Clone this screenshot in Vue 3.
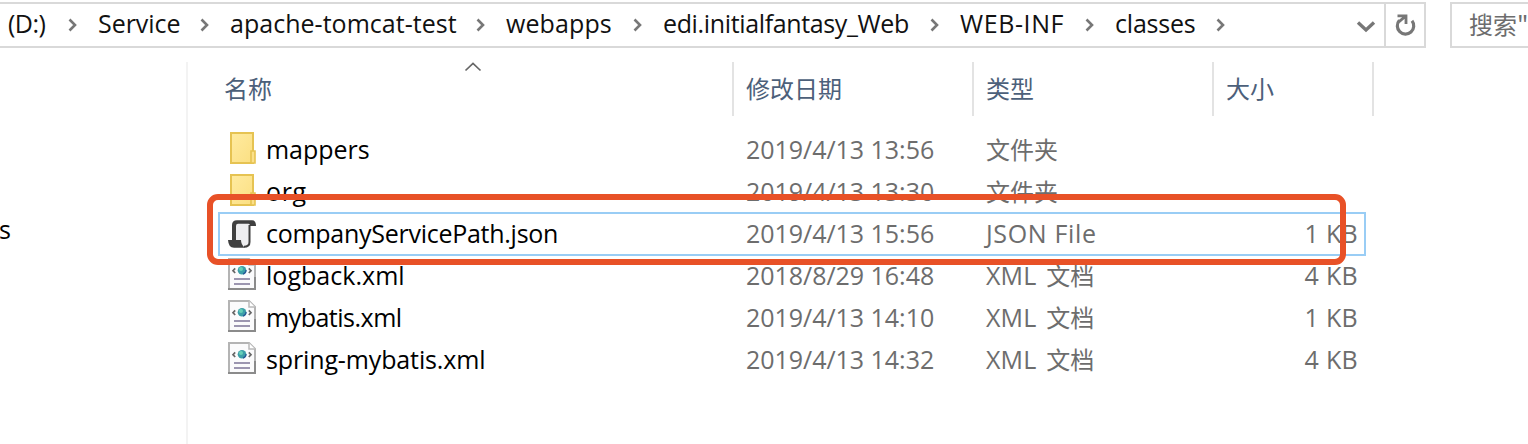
<script setup>
const crumbs = [
  { text: '(D:)', cls: 't0' },
  { text: 'Service', cls: 't4' },
  { text: 'apache-tomcat-test', cls: 't5' },
  { text: 'webapps', cls: 't7' },
  { text: 'edi.initialfantasy_Web', cls: 't1' },
  { text: 'WEB-INF', cls: 't10' },
  { text: 'classes', cls: 't3' },
]
const files = [
  { icon: 'folder', name: 'mappers', cls: 't4', date: '2019/4/13 13:56', latin: '', cjk: '文件夹', size: '' },
  { icon: 'folder', name: 'org', cls: 't9', date: '2019/4/13 13:30', latin: '', cjk: '文件夹', size: '' },
  { icon: 'script', name: 'companyServicePath.json', cls: 't2', date: '2019/4/13 15:56', latin: 'JSON File', cjk: '', size: '1 KB', selected: true },
  { icon: 'xml', name: 'logback.xml', cls: 't5', date: '2018/8/29 16:48', latin: 'XML', cjk: '文档', size: '4 KB' },
  { icon: 'xml', name: 'mybatis.xml', cls: 't0', date: '2019/4/13 14:10', latin: 'XML', cjk: '文档', size: '1 KB' },
  { icon: 'xml', name: 'spring-mybatis.xml', cls: 't4b', date: '2019/4/13 14:32', latin: 'XML', cjk: '文档', size: '4 KB' },
]
</script>

<template>
  <div class="window">
    <div class="toolbar">
      <div class="address">
        <div class="crumbs">
          <div v-for="c in crumbs" :key="c.text" class="crumb">
            <span :class="c.cls">{{ c.text }}</span>
            <svg class="chev" width="10" height="14" viewBox="0 0 10 14"><path d="M1.5 1.5 L7 7 L1.5 12.5" /></svg>
          </div>
        </div>
        <svg class="drop" width="20" height="14" viewBox="0 0 20 14"><path d="M2 2.5 L10 10 L18 2.5" /></svg>
        <div class="refresh">
          <svg width="22" height="24" viewBox="0 0 22 24">
            <path class="ring" d="M5.4 7.4 A8.2 8.2 0 1 0 18 7.8" />
            <path class="tip" d="M3.5 2.8 H12 V11 M11.5 3.3 L5.4 8.4" />
          </svg>
        </div>
      </div>
      <div class="search">搜索"</div>
    </div>

    <div class="body">
      <div class="side"><span>s</span></div>
      <div class="list">
        <div class="head">
          <div class="col name">名称
            <svg class="sort" width="18" height="10" viewBox="0 0 18 10"><path d="M1.5 8.5 L9 1.5 L16.5 8.5" /></svg>
          </div>
          <div class="col">修改日期</div>
          <div class="col">类型</div>
          <div class="col">大小</div>
        </div>
        <div class="rows">
          <div v-for="f in files" :key="f.name" class="row" :class="{ selected: f.selected }">
            <div class="icon">
              <svg v-if="f.icon === 'folder'" width="28" height="34" viewBox="0 0 28 34">
                <defs>
                  <linearGradient id="fold" x1="0" y1="0" x2="1" y2="1">
                    <stop offset="0" stop-color="#ffeba0" /><stop offset="1" stop-color="#fbdf82" />
                  </linearGradient>
                </defs>
                <rect x="3" y="2" width="22" height="30" fill="url(#fold)" stroke="#e6c352" stroke-width="2" />
                <path d="M23 32 V20 H27 V32 Z" fill="#fbe08a" stroke="#e6c352" stroke-width="1.6" />
              </svg>
              <svg v-else-if="f.icon === 'script'" width="28" height="34" viewBox="0 0 28 34">
                <path d="M8 4 H22 V26 Q20 30 17 30 H14 L12 23 H6 Z" fill="#eeeef0" />
                <path d="M4 23 V8 Q4 3.2 9 3.2 H24 Q28 3.2 28 9 H22 Q22 6.8 20.5 6.8 H10 Q8 6.8 8 9 V23 Z" fill="#404040" />
                <path d="M0 23 H13 Q13 28 17 30.8 H6 Q0.5 30.8 0 23 Z" fill="#404040" />
                <path d="M21.5 8 V25 Q21.5 29.8 16 29.8" fill="none" stroke="#404040" stroke-width="2" />
              </svg>
              <svg v-else width="28" height="34" viewBox="0 0 28 34">
                <path d="M1 2 H21 L27 8 V32 H1 Z" fill="#fbfbfc" stroke="#b4b4b4" stroke-width="2" />
                <path d="M21 2 V8 H27" fill="#fff" stroke="#b9b9b9" stroke-width="1.5" />
                <path d="M0 32 H28 M27 20 V32" fill="none" stroke="#8b8b8b" stroke-width="2" />
                <circle cx="14" cy="13.3" r="4.3" fill="#3c9fa8" />
                <circle cx="13" cy="12" r="2" fill="#66d0b8" />
                <path d="M15 17 A4 4 0 0 0 18 13" fill="none" stroke="#285c98" stroke-width="1.3" />
                <path d="M7.2 11.4 L5 13.7 L7.2 16 M20.8 11.4 L23 13.7 L20.8 16" fill="none" stroke="#666" stroke-width="1.7" />
                <path d="M6 22 H22 M6 27 H22" stroke="#9c96b0" stroke-width="2" />
              </svg>
            </div>
            <div class="fname"><span :class="f.cls">{{ f.name }}</span></div>
            <div class="date">{{ f.date }}</div>
            <div class="type">
              <span v-if="f.latin" class="latin" :class="{ wide: !f.cjk }">{{ f.latin }}</span>
              <span v-if="f.cjk" class="cjk">{{ f.cjk }}</span>
            </div>
            <div class="size">{{ f.size }}</div>
          </div>
        </div>
      </div>
    </div>
    <div class="marker"></div>
  </div>
</template>

<style>
body { margin: 0; background: #fff; }
</style>

<style scoped>
* { box-sizing: border-box; }
.window {
  position: relative; width: 1528px; height: 444px; overflow: hidden; background: #fff;
  font: 25px/42px "Open Sans", "Noto Sans CJK SC", sans-serif; color: #000; white-space: nowrap;
  display: flex; flex-direction: column;
}
svg { display: block; flex: none; }
.t0 { letter-spacing: -.5px; } .t1 { letter-spacing: -.36px; } .t2 { letter-spacing: -.27px; }
.t3 { letter-spacing: -.2px; } .t4 { letter-spacing: -.03px; } .t4b { letter-spacing: -.13px; } .t5 { letter-spacing: .03px; }
.t7 { letter-spacing: .1px; } .t9 { letter-spacing: .6px; } .t10 { letter-spacing: .6px; }

.toolbar { display: flex; gap: 24px; height: 62px; padding-top: 2px; flex: none; }
.address { display: flex; width: 1426px; height: 46px; flex: none; border: 2px solid #d9d9d9; border-left: 0; align-items: center; }
.crumbs { display: grid; grid-template-columns: 90px 132px 276px 157px 297px 155px 131px; padding-left: 8px; flex: 1; }
.crumb { display: flex; align-items: center; justify-content: space-between; padding-right: 20px; height: 42px; color: #111; }
.crumb span { line-height: 38px; padding-bottom: 4px; }
.chev path { fill: none; stroke: #777; stroke-width: 2.6; }
.drop { margin-right: 8px; margin-top: 3px; }
.drop path { fill: none; stroke: #777; stroke-width: 3.4; }
.refresh { width: 40px; height: 42px; border-left: 2px solid #d9d9d9; display: flex; align-items: center; justify-content: center; }
.ring { fill: none; stroke: #777; stroke-width: 3.2; }
.tip { fill: none; stroke: #777; stroke-width: 2.8; }
.search { width: 90px; height: 46px; flex: none; border: 2px solid #d9d9d9; border-right: 0; padding-left: 17px; color: #6d6d6d; font: 24px/40px "Noto Sans CJK SC", sans-serif; }

.body { display: flex; flex: 1; }
.side { width: 188px; border-right: 2px solid #f3f3f3; padding-top: 146px; flex: none; }
.side span { display: block; margin-left: -1px; }
.list { width: 1186px; }
.head { display: grid; grid-template-columns: 546px 240px 240px 160px; height: 54px; color: #4c607a; font: 24px/51px "Noto Sans CJK SC", sans-serif; }
.col { border-right: 2px solid #e3e3e3; padding-left: 12px; }
.name { display: flex; padding-left: 36px; }
.sort { margin-left: 192px; }
.sort path { fill: none; stroke: #666; stroke-width: 1.7; }
.rows { padding: 13px 0 0 30px; }
.row { display: grid; grid-template-columns: 38px 480px 240px 226px 146px; height: 42px; width: 1148px; padding-left: 10px; align-items: center; line-height: 40px; }
.row > div { height: 42px; }
.icon { display: flex; align-items: center; }
.icon svg { margin-top: -4px; }
.selected { height: 44px; margin: -1px 0; border: 2px solid #99cdf5; padding-left: 8px; line-height: 38px; }
.selected .icon svg { margin-top: -3px; }
.date, .type, .size { color: #6d6d6d; }
.date { letter-spacing: -.03px; }
.type { display: flex; gap: 10px; }
.latin { letter-spacing: .1px; }
.wide { letter-spacing: .65px; }
.cjk { font: 24px/39px "Noto Sans CJK SC", sans-serif; }
.size { text-align: right; letter-spacing: .3px; }
.marker { position: absolute; left: 207px; top: 194px; width: 1139px; height: 71px; border: 6px solid #e85127; border-radius: 11px; }
</style>
